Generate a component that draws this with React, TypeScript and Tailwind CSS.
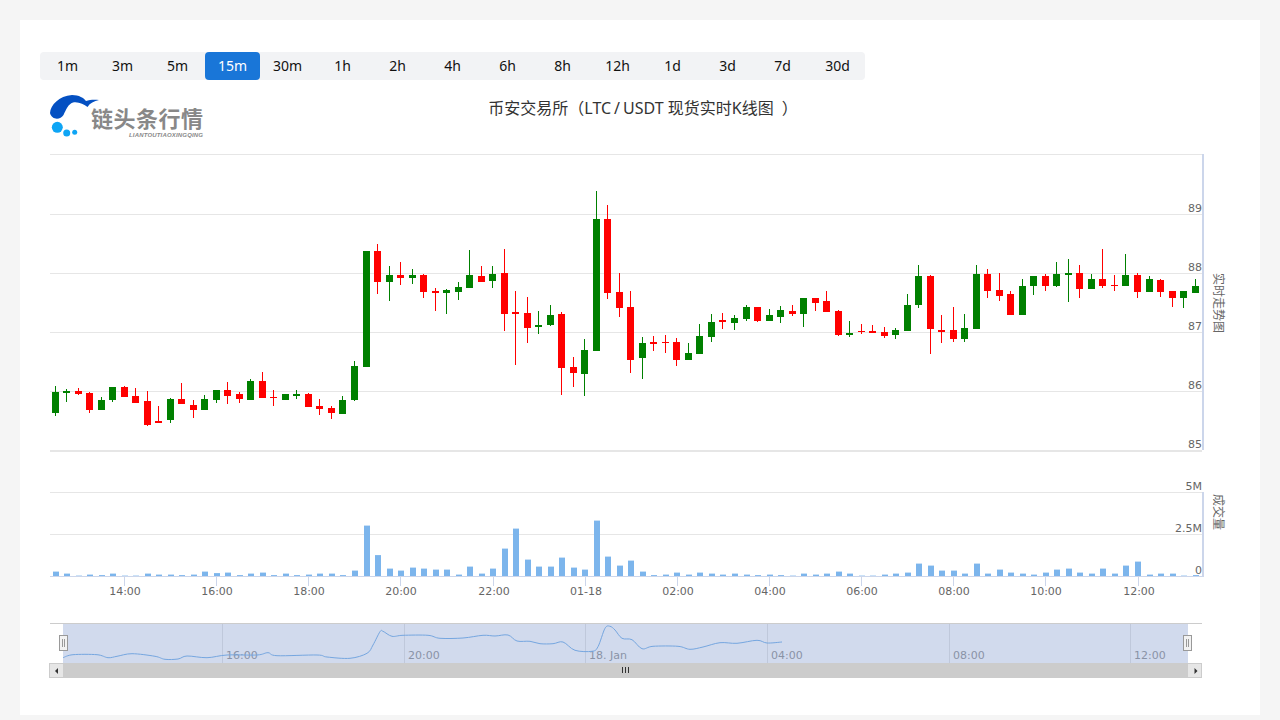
const tabs = ["1m", "3m", "5m", "15m", "30m", "1h", "2h", "4h", "6h", "8h", "12h", "1d", "3d", "7d", "30d"];

// [high, bodyTop, bodyBottom, low] in chart pixels
const green = new Set([0, 1, 4, 5, 10, 13, 14, 17, 20, 21, 25, 26, 27, 29, 31, 34, 35, 36, 38, 42, 43, 46, 47, 51, 55, 56, 57, 59, 60, 62, 63, 65, 69, 73, 74, 75, 79, 80, 84, 85, 87, 88, 90, 93, 95, 98, 99]);
const candles = [
  [386, 392, 413, 416], [389, 391, 393, 402], [388, 391, 394, 395], [392, 393, 410, 413], [397, 400, 410, 410],
  [387, 387, 400, 402], [386, 387, 397, 397], [388, 396, 403, 403], [391, 401, 425, 426], [406, 421, 423, 423],
  [398, 399, 420, 423], [383, 399, 404, 404], [400, 405, 410, 418], [395, 399, 410, 410], [390, 390, 400, 403],
  [382, 390, 396, 404], [392, 394, 399, 403], [379, 381, 400, 400], [372, 381, 398, 398], [390, 397, 398, 406],
  [394, 394, 400, 400], [390, 394, 396, 399], [393, 394, 407, 407], [399, 406, 409, 415], [406, 408, 413, 419],
  [396, 400, 414, 414], [361, 366, 400, 401], [251, 251, 367, 367], [244, 251, 282, 294], [266, 275, 282, 301],
  [262, 275, 278, 285], [269, 275, 278, 284], [274, 275, 292, 298], [288, 291, 293, 311], [289, 290, 293, 314],
  [282, 287, 292, 300], [250, 275, 288, 288], [266, 276, 282, 282], [266, 274, 281, 288], [249, 273, 314, 331],
  [291, 312, 314, 365], [297, 313, 328, 343], [311, 325, 327, 334], [305, 315, 325, 326], [312, 314, 368, 395],
  [357, 367, 373, 387], [339, 350, 374, 396], [191, 219, 351, 351], [205, 219, 293, 299], [273, 292, 308, 317],
  [291, 307, 360, 373], [337, 343, 358, 379], [336, 342, 344, 351], [335, 342, 343, 353], [338, 342, 360, 366],
  [343, 353, 360, 360], [324, 336, 354, 354], [314, 322, 337, 342], [313, 320, 322, 329], [315, 318, 323, 330],
  [305, 307, 319, 321], [307, 307, 321, 322], [309, 315, 321, 321], [306, 310, 317, 323], [305, 311, 314, 316],
  [298, 298, 314, 327], [298, 298, 303, 311], [291, 301, 312, 312], [310, 311, 335, 336], [321, 333, 335, 337],
  [324, 331, 332, 334], [325, 331, 333, 333], [327, 332, 336, 338], [328, 330, 335, 339], [294, 305, 331, 331],
  [265, 276, 305, 308], [275, 276, 329, 354], [315, 330, 332, 343], [307, 330, 339, 342], [314, 328, 339, 342],
  [265, 274, 329, 329], [269, 274, 291, 298], [273, 290, 296, 301], [291, 294, 315, 315], [279, 286, 315, 315],
  [276, 276, 286, 295], [274, 276, 286, 291], [262, 274, 286, 287], [259, 273, 275, 302], [265, 273, 289, 298],
  [274, 279, 289, 289], [249, 279, 286, 288], [275, 285, 286, 291], [254, 275, 286, 286], [273, 275, 292, 298],
  [276, 279, 292, 292], [279, 280, 292, 297], [291, 291, 298, 307], [291, 291, 298, 308], [279, 286, 293, 293],
];

const volumes = [
  5, 3, 1, 2, 1.5, 3, 1, 1, 3, 2, 2, 1.5, 2, 5, 3.5, 4, 1.5, 3, 4, 1.5,
  3, 1.5, 2, 3, 3, 1.5, 6, 51, 21.5, 8, 6, 9, 8, 7, 7, 2, 10, 3, 8, 28,
  48, 17, 10, 10, 19, 9, 7, 56, 20, 11, 16, 5, 1.5, 2, 4, 2, 4, 3, 2, 3,
  2, 1.5, 2, 1.5, 1, 3, 2, 3, 5, 3, 1, 1, 2, 3, 4, 13, 11, 6, 6, 3,
  13, 3, 7, 4, 3, 2, 4, 7, 8, 4, 3, 8, 3, 11, 15, 2, 3, 3, 1, 1.5,
];

const navPoints = [
  [63, 657.7], [73, 654.7], [97, 654.7], [108, 657.7], [117, 656.3], [132, 653.7], [155, 656.3], [165, 659.3],
  [178, 659], [187, 656], [207, 657.7], [227, 655], [257, 655], [268, 652.7], [277, 655.7], [317, 655], [327, 657],
  [350, 658.3], [367, 653.3], [373, 645], [380, 631.7], [383, 631.3], [392, 636.3], [403, 635.3], [428, 635.3],
  [440, 638.3], [463, 638], [483, 635.3], [495, 636], [508, 635], [517, 641], [530, 641.3], [540, 643.7], [553, 643.7],
  [563, 642], [575, 650.3], [592, 651.3], [598, 646.7], [605, 628.3], [610, 626.3], [615, 630], [622, 638.3],
  [632, 639.7], [642, 648.7], [653, 646.3], [678, 646.3], [690, 649.3], [703, 647], [720, 642.7], [737, 643.3],
  [757, 640.3], [767, 643], [782, 642],
];

const xLabels = [
  [124, "14:00"], [216, "16:00"], [308, "18:00"], [400, "20:00"], [493, "22:00"], [585, "01-18"],
  [677, "02:00"], [769, "04:00"], [861, "06:00"], [953, "08:00"], [1045, "10:00"], [1138, "12:00"],
] as const;
const navLabels = [
  [222, "16:00"], [404, "20:00"], [585, "18. Jan"], [767, "04:00"], [949, "08:00"], [1130, "12:00"],
] as const;

const labelFont = "'DejaVu Sans', sans-serif";

function candleX(i: number) {
  return Math.floor(55.1 + i * 11.515);
}

// smooth line through the navigator points
function smoothPath(pts: number[][]) {
  let d = `M${pts[0][0]} ${pts[0][1]}`;
  for (let i = 0; i < pts.length - 1; i++) {
    const p0 = pts[Math.max(i - 1, 0)];
    const p1 = pts[i];
    const p2 = pts[i + 1];
    const p3 = pts[Math.min(i + 2, pts.length - 1)];
    const c1x = p1[0] + (p2[0] - p0[0]) / 6;
    const c1y = p1[1] + (p2[1] - p0[1]) / 6;
    const c2x = p2[0] - (p3[0] - p1[0]) / 6;
    const c2y = p2[1] - (p3[1] - p1[1]) / 6;
    d += ` C${c1x} ${c1y} ${c2x} ${c2y} ${p2[0]} ${p2[1]}`;
  }
  return d;
}

function Logo() {
  return (
    <svg width="160" height="46" viewBox="50 93 160 46" className="block">
      <path
        d="M50 113 C50.500 105 59 96 72 95 C79 95 84 98 86 101 C90 99.500 95 99.500 99 100 C94 101 90 103 87.500 107 C84 104 78 101.500 73 102.500 C68 104 66 110 63.500 115 C60.500 120 52 120.500 50 113 Z"
        fill="#0450c2"
      />
      <circle cx="57.300" cy="127.300" r="5.500" fill="#0ea5f5" />
      <circle cx="66.700" cy="133" r="3.500" fill="#0ea5f5" />
      <circle cx="74.700" cy="132.300" r="2.500" fill="#0ea5f5" />
      <text
        x="91"
        y="126.500"
        fontSize="22"
        fontWeight="700"
        fill="#888888"
        textLength="112"
        fontFamily="'Noto Sans CJK SC', sans-serif"
      >
        链头条行情
      </text>
      <text
        x="129"
        y="136.500"
        fontSize="6"
        fontWeight="700"
        fontStyle="italic"
        fill="#888888"
        textLength="74"
        fontFamily="'Liberation Sans', sans-serif"
      >
        LIANTOUTIAOXINGQING
      </text>
    </svg>
  );
}

function Chart() {
  return (
    <svg width="1200" height="540" viewBox="40 150 1200 540" className="block" fontFamily={labelFont}>
      {/* grid */}
      <g shapeRendering="crispEdges" fill="#e6e6e6">
        {[154, 214, 273, 332, 391, 492, 534].map((y) => (
          <rect key={y} x="50" y={y} width="1152" height="1" />
        ))}
        <rect x="50" y="449.500" width="1152" height="2" />
      </g>

      {/* price candles */}
      <g shapeRendering="crispEdges">
        {candles.map(([hi, top, bottom, lo], i) => {
          const x = candleX(i);
          const fill = green.has(i) ? "#008000" : "#ff0000";
          return (
            <g key={i} fill={fill}>
              <rect x={x} y={hi} width="1" height={lo - hi} />
              <rect x={x - 3} y={top} width="7" height={bottom - top} />
            </g>
          );
        })}
      </g>

      {/* volume */}
      <g fill="#7cb5ec">
        {volumes.map((h, i) => (
          <rect key={i} x={candleX(i) - 2} y={576 - h + 0.6} width="6" height={h - 0.6} />
        ))}
      </g>

      {/* axes */}
      <g shapeRendering="crispEdges" fill="#ccd6eb">
        <rect x="1202" y="154" width="2" height="296" />
        <rect x="1202" y="492" width="2" height="85" />
        <rect x="50" y="576" width="1152" height="1" />
        {xLabels.map(([x]) => (
          <rect key={x} x={x} y="576" width="1" height="10" />
        ))}
      </g>

      <g fontSize="11" fill="#666666" textAnchor="end">
        {[[212, "89"], [271, "88"], [330, "87"], [389, "86"], [448, "85"], [490, "5M"], [532, "2.5M"], [574, "0"]].map(([y, t]) => (
          <text key={t} x="1202" y={y}>
            {t}
          </text>
        ))}
      </g>
      <g fontSize="11" fill="#666666" textAnchor="middle">
        {xLabels.map(([x, t]) => (
          <text key={t} x={x + 1} y="595">
            {t}
          </text>
        ))}
      </g>

      <g fontSize="12" fill="#666666" textAnchor="middle" fontFamily="'Noto Sans CJK SC', sans-serif">
        <text transform="translate(1214 303) rotate(90)">实时走势图</text>
        <text transform="translate(1214 512) rotate(90)">成交量</text>
      </g>

      {/* navigator */}
      <rect x="50" y="623" width="1152" height="1" fill="#cccccc" shapeRendering="crispEdges" />
      <g shapeRendering="crispEdges" fill="#e6e6e6">
        {navLabels.map(([x]) => (
          <rect key={x} x={x} y="624" width="1" height="39" />
        ))}
      </g>
      <g fontSize="11" fill="#999999">
        {navLabels.map(([x, t]) => (
          <text key={t} x={x + 4} y="659">
            {t}
          </text>
        ))}
      </g>
      <path d={smoothPath(navPoints)} fill="none" stroke="#7cb5ec" strokeWidth="1" />
      <rect x="63" y="624" width="1125" height="39" fill="#6685c2" fillOpacity="0.3" shapeRendering="crispEdges" />

      {/* navigator handles */}
      {[59, 1183].map((x) => (
        <g key={x} shapeRendering="crispEdges">
          <rect x={x + 0.5} y="635.500" width="8" height="15" fill="#f2f2f2" stroke="#999999" />
          <rect x={x + 3} y="639" width="1" height="8" fill="#999999" />
          <rect x={x + 5} y="639" width="1" height="8" fill="#999999" />
        </g>
      ))}

      {/* scrollbar */}
      <g shapeRendering="crispEdges">
        <rect x="49" y="663" width="1153" height="15" fill="#cccccc" />
        <rect x="49.500" y="663.500" width="14" height="14" fill="#e6e6e6" stroke="#cccccc" />
        <rect x="1187.500" y="663.500" width="14" height="14" fill="#e6e6e6" stroke="#cccccc" />
        <rect x="622" y="667" width="1" height="6" fill="#333333" />
        <rect x="625" y="667" width="1" height="6" fill="#333333" />
        <rect x="628" y="667" width="1" height="6" fill="#333333" />
      </g>
      <path d="M55 671 L58 668 L58 674 Z" fill="#333333" />
      <path d="M1197.500 671 L1194.500 668 L1194.500 674 Z" fill="#333333" />
    </svg>
  );
}

export default function App() {
  return (
    <div className="h-[720px] overflow-hidden bg-[#f5f5f5] p-5">
      <div className="h-[695px] bg-white px-5 pt-8">
        <div className="flex h-7 w-fit rounded-sm bg-[#f2f3f5]">
          {tabs.map((tab) => (
            <div
              key={tab}
              className={
                tab === "15m"
                  ? "flex w-[55px] items-center justify-center rounded-sm bg-[#1976d8] font-['Noto_Sans','Noto_Sans_CJK_SC',sans-serif] text-sm text-white"
                  : "flex w-[55px] items-center justify-center font-['Noto_Sans','Noto_Sans_CJK_SC',sans-serif] text-sm text-[#111111]"
              }
            >
              {tab}
            </div>
          ))}
        </div>

        <div className="grid h-[70px] grid-cols-[1fr_auto_1fr]">
          <div className="pl-2.5 pt-[13px]">
            <Logo />
          </div>
          <div className="pl-1.5 pt-[17px] font-['Noto_Sans','Noto_Sans_CJK_SC',sans-serif] text-base leading-[22px] text-[#333333]">
            币安交易所（LTC<span className="px-[3px]">/</span>USDT 现货实时K线图<span className="ml-2">）</span>
          </div>
          <div />
        </div>

        <Chart />
      </div>
    </div>
  );
}
